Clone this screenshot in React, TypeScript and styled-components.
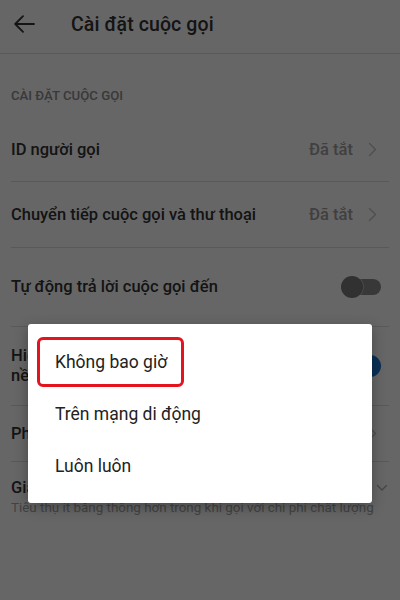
import React from 'react'
import styled, { createGlobalStyle } from 'styled-components'

const GlobalStyle = createGlobalStyle`
  html, body {
    margin: 0;
    padding: 0;
    background: #ffffff;
  }
  body {
    font-family: Roboto, "Noto Sans", "Liberation Sans", sans-serif;
    -webkit-font-smoothing: antialiased;
  }
`

type Option = { label: string; marked?: boolean }

const OPTIONS: Option[] = [
  { label: 'Không bao giờ', marked: true },
  { label: 'Trên mạng di động' },
  { label: 'Luôn luôn' },
]

const BackIcon = () => (
  <svg width="21" height="18" viewBox="0 0 21 18" fill="none" stroke="#333" strokeWidth="1.8" strokeLinecap="round" strokeLinejoin="round">
    <path d="M20 9H1.5M9 1.2L1.2 9 9 16.8" />
  </svg>
)

const ChevronRight = () => (
  <svg width="9" height="15" viewBox="0 0 9 15" fill="none" stroke="#c4c4c4" strokeWidth="1.4" strokeLinecap="round" strokeLinejoin="round">
    <path d="M1.5 1.5L7.5 7.5 1.5 13.5" />
  </svg>
)

const ChevronDown = () => (
  <svg width="12" height="8" viewBox="0 0 12 8" fill="none" stroke="#b0b0b0" strokeWidth="1.4" strokeLinecap="round" strokeLinejoin="round">
    <path d="M1.5 1.5L6 6 10.5 1.5" />
  </svg>
)

export default function App() {
  return (
    <>
      <GlobalStyle />
      <Screen>
        <Header>
          <BackButton type="button" aria-label="Quay lại">
            <BackIcon />
          </BackButton>
          <Title>Cài đặt cuộc gọi</Title>
        </Header>

        <SectionLabel>Cài đặt cuộc gọi</SectionLabel>

        <List>
          <Row $height={64}>
            <RowText>ID người gọi</RowText>
            <Trailing>
              <Value>Đã tắt</Value>
              <ChevronRight />
            </Trailing>
          </Row>
          <Row $height={66}>
            <RowText>Chuyển tiếp cuộc gọi và thư thoại</RowText>
            <Trailing>
              <Value>Đã tắt</Value>
              <ChevronRight />
            </Trailing>
          </Row>
          <Row $height={79}>
            <RowText>Tự động trả lời cuộc gọi đến</RowText>
            <Switch $on={false}>
              <Thumb $on={false} />
            </Switch>
          </Row>
          <Row $height={79}>
            <RowText>
              Hiển thị cuộc gọi đến ở chế độ
              <br />
              nền
            </RowText>
            <Switch $on>
              <Thumb $on />
            </Switch>
          </Row>
          <Row $height={56}>
            <RowText>Phản hồi nhanh</RowText>
            <Trailing>
              <ChevronRight />
            </Trailing>
          </Row>
          <StackRow>
            <StackHead>
              <RowText>Giảm sử dụng dữ liệu</RowText>
              <ChevronDown />
            </StackHead>
            <Hint>Tiêu thụ ít băng thông hơn trong khi gọi với chi phí chất lượng</Hint>
          </StackRow>
        </List>

        <Backdrop />

        <Dialog role="dialog">
          {OPTIONS.map((o) => (
            <OptionItem key={o.label}>
              {o.marked ? <Mark>{o.label}</Mark> : o.label}
            </OptionItem>
          ))}
        </Dialog>
      </Screen>
    </>
  )
}

const Screen = styled.div`
  position: relative;
  width: 400px;
  height: 600px;
  overflow: hidden;
  background: #ffffff;
  color: #333333;
`

const Header = styled.header`
  height: 54px;
  display: flex;
  align-items: center;
  border-bottom: 1px solid #dedede;
  box-sizing: border-box;
  padding-left: 13px;
`

const BackButton = styled.button`
  border: none;
  background: none;
  padding: 0;
  width: 22px;
  height: 20px;
  display: flex;
  align-items: center;
  justify-content: center;
  margin-top: -6px;
`

const Title = styled.h1`
  margin: -5px 0 0 36px;
  font-size: 19.5px;
  font-weight: 500;
  color: #333333;
  letter-spacing: 0.1px;
`

const SectionLabel = styled.div`
  margin: 34px 11px 0;
  height: 30px;
  line-height: 16px;
  font-size: 13.2px;
  font-weight: 500;
  text-transform: uppercase;
  color: #8e8e8e;
`

const List = styled.div`
  margin: 0 11px;
`

const Row = styled.div<{ $height: number }>`
  height: ${({ $height }) => $height}px;
  display: flex;
  align-items: center;
  justify-content: space-between;
  border-bottom: 1px solid #dedede;
  box-sizing: border-box;
`

const RowText = styled.div`
  font-size: 16.5px;
  font-weight: 500;
  color: #333333;
  line-height: 20px;
`

const Trailing = styled.div`
  display: flex;
  align-items: center;
  gap: 15px;
  padding-right: 12px;
`

const Value = styled.span`
  font-size: 16.5px;
  font-weight: 500;
  color: #a0a0a0;
`

const Switch = styled.div<{ $on: boolean }>`
  position: relative;
  width: 40px;
  height: 22px;
  margin-right: 8px;
  flex-shrink: 0;

  &::before {
    content: '';
    position: absolute;
    top: 3px;
    bottom: 3px;
    left: ${({ $on }) => ($on ? '0' : '11px')};
    right: ${({ $on }) => ($on ? '11px' : '0')};
    border-radius: 8px;
    background: ${({ $on }) => ($on ? '#8fbbe8' : '#8c8c8c')};
  }
`

const Thumb = styled.div<{ $on: boolean }>`
  position: absolute;
  top: 0;
  left: ${({ $on }) => ($on ? '18px' : '0')};
  width: 22px;
  height: 22px;
  border-radius: 50%;
  background: ${({ $on }) => ($on ? '#1976d2' : '#7a7a7a')};
  box-shadow: 0 0 0 1px rgba(255, 255, 255, 0.35);
`

const StackRow = styled.div`
  padding-top: 16px;
`

const StackHead = styled.div`
  display: flex;
  align-items: center;
  justify-content: space-between;
  padding-right: 1px;
`

const Hint = styled.div`
  margin-top: 1px;
  font-size: 13.4px;
  line-height: 18px;
  color: #a8a8a8;
  white-space: nowrap;
`

const Backdrop = styled.div`
  position: absolute;
  inset: 0;
  background: rgba(0, 0, 0, 0.6);
`

const Dialog = styled.div`
  position: absolute;
  left: 28px;
  top: 324px;
  width: 344px;
  box-sizing: border-box;
  padding: 12px 0 11px;
  background: #ffffff;
  border-radius: 3px;
  box-shadow: 0 4px 14px rgba(0, 0, 0, 0.3);
`

const OptionItem = styled.div`
  height: 52px;
  display: flex;
  align-items: center;
  padding-left: 27px;
  font-size: 17.5px;
  color: #222222;
`

const Mark = styled.span`
  display: inline-flex;
  align-items: center;
  height: 50px;
  box-sizing: border-box;
  margin-left: -18px;
  padding: 0 14px 0 15px;
  border: 3px solid #e3141d;
  border-radius: 6px;
`
